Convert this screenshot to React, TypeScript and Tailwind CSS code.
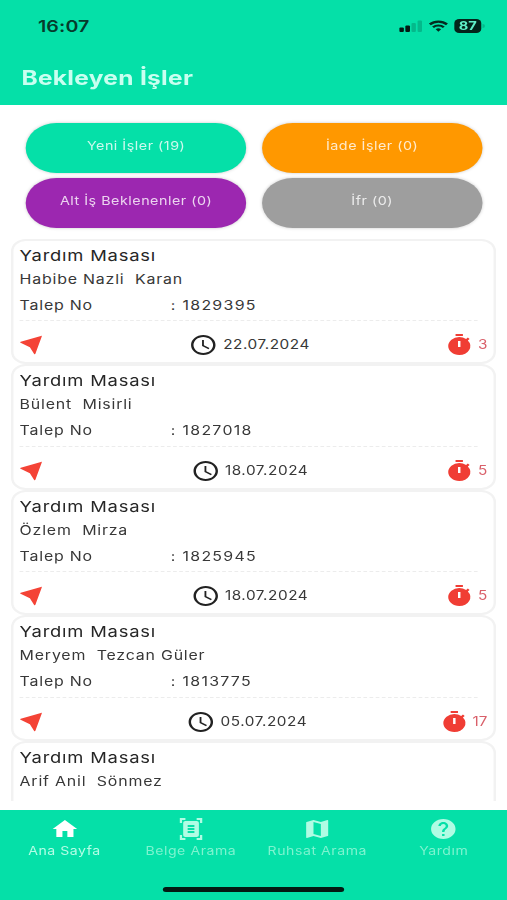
import type { ReactNode } from 'react';
import { MdAccessTime, MdDocumentScanner, MdHelp, MdHome, MdMap, MdTimer } from 'react-icons/md';

type Job = { name: string; no?: string; date?: string; days?: string };

const jobs: Job[] = [
  { name: 'Habibe Nazli  Karan', no: '1829395', date: '22.07.2024', days: '3' },
  { name: 'Bülent  Misirli', no: '1827018', date: '18.07.2024', days: '5' },
  { name: 'Özlem  Mirza', no: '1825945', date: '18.07.2024', days: '5' },
  { name: 'Meryem  Tezcan Güler', no: '1813775', date: '05.07.2024', days: '17' },
  { name: 'Arif Anil  Sönmez' },
];

function StatusBar() {
  return (
    <div className="flex h-[52px] items-center justify-between pl-[31px] pr-[18px] text-[#063b2c]">
      <span className="text-[16px] font-semibold leading-5 tracking-[0.1px]">16:07</span>
      <div className="flex items-center gap-[5px]">
        <svg className="h-3 w-[19px]" viewBox="0 0 19 12">
          <rect x="0" y="7.5" width="3.8" height="4.5" rx="1" fill="#031a13" />
          <rect x="5" y="5.5" width="3.8" height="6.5" rx="1" fill="#031a13" />
          <rect x="10" y="3" width="3.6" height="9" rx="1" fill="#04b98b" />
          <rect x="15" y="0.5" width="3.6" height="11.5" rx="1" fill="#04b98b" />
        </svg>
        <svg className="h-3 w-4" viewBox="0 0 16 12" fill="none" stroke="#042a1f" strokeWidth="2.2">
          <path d="M1 4.4a10 10 0 0 1 14 0" />
          <path d="M3.6 7.3a6.3 6.3 0 0 1 8.8 0" />
          <path d="M5.8 9.3 8 11.7l2.2-2.4a3.2 3.2 0 0 0-4.4 0z" fill="#042a1f" stroke="none" />
        </svg>
        <div className="flex items-center gap-px">
          <span className="flex h-[14px] w-[22px] items-center justify-center rounded-[4px] bg-[#03251b] text-[12px] font-bold leading-none text-[#5ff0c8]">
            87
          </span>
          <span className="h-1 w-[2px] rounded-r bg-[#04b98b]" />
        </div>
      </div>
    </div>
  );
}

function Pill({ color, children }: { color: string; children: ReactNode }) {
  return (
    <div
      className={`flex h-[50px] justify-center rounded-full pt-[14.5px] text-[11.7px] leading-4 tracking-[0.42px] text-white/80 shadow-[0_0_3px_rgba(0,0,0,0.22)] ${color}`}
    >
      {children}
    </div>
  );
}

function LocationArrow() {
  return (
    <svg className="h-6 w-7" viewBox="0 0 28 24" fill="#f44336">
      <path d="M.9 8.7 17.4 2.9c.5-.2.9.2.7.7L12.9 20.8c-.2.5-.8.5-1 .1L8.4 14.3.8 9.7c-.5-.3-.4-.8.1-1z" />
    </svg>
  );
}

function JobCard({ job }: { job: Job }) {
  return (
    <article className="h-[125.5px] shrink-0 rounded-[12px] border-2 border-[#f2f2f2] bg-white px-[5px] text-[#383838]">
      <h2 className="mt-[5px] text-[15px] leading-5 tracking-[0.65px] text-[#262626]">Yardım Masası</h2>
      <p className="mt-[3px] whitespace-pre text-[13px] leading-5 tracking-[0.65px]">{job.name}</p>
      {job.no && (
        <>
          <div className="mt-[6px] flex text-[13px] leading-5 tracking-[0.65px]">
            <span className="w-[123.5px]">Talep No</span>
            <span className="tracking-[1.05px]">: {job.no}</span>
          </div>
          <div className="mr-[8px] mt-[5.5px] border-t border-dashed border-[#ececec]" />
          <div className="mt-[12px] flex h-6 items-center justify-between">
            <LocationArrow />
            <span className="flex items-center gap-[4px] text-[12.5px] tracking-[0.45px]">
              <MdAccessTime className="size-6 text-[#222]" />
              <span className="pt-px">{job.date}</span>
            </span>
            <span className="flex items-center gap-[3px] text-[12.5px] text-[#d9606a]">
              <MdTimer className="size-6 shrink-0 text-[#f03d34]" />
              <span className="pt-px">{job.days}</span>
            </span>
          </div>
        </>
      )}
    </article>
  );
}

function Tab({ icon, label, active }: { icon: ReactNode; label: string; active?: boolean }) {
  return (
    <div className={`flex flex-1 flex-col items-center ${active ? 'text-white' : 'text-[#b0fce4]'}`}>
      <div className="flex h-6 items-center">{icon}</div>
      <span className={`mt-[2px] whitespace-nowrap text-[11.5px] leading-4 tracking-[0.45px] ${active ? 'text-[#b5fde6]' : 'text-[#7df3cf]'}`}>
        {label}
      </span>
    </div>
  );
}

export default function App() {
  return (
    <div className="h-[900px] w-[507px] overflow-hidden bg-white">
      <div className="flex h-[900px] w-[414px] origin-top-left scale-x-[1.2246] flex-col font-['Inter','Liberation_Sans',sans-serif]">
        <header className="h-[105px] shrink-0 bg-[#05e0a8]">
          <StatusBar />
          <h1 className="pl-[17.5px] pt-[13px] text-[20px] font-bold leading-[26px] tracking-[0.25px] text-[#c9fff0]">
            Bekleyen İşler
          </h1>
        </header>

        <section className="mt-[18px] grid shrink-0 grid-cols-2 gap-x-[12.5px] gap-y-[5px] pl-[21px] pr-[20px]">
          <Pill color="bg-[#05e0a8]">Yeni İşler (19)</Pill>
          <Pill color="bg-[#ff9800]">İade İşler (0)</Pill>
          <Pill color="bg-[#9c27b0]">Alt İş Beklenenler (0)</Pill>
          <Pill color="bg-[#9e9e9e]">İfr (0)</Pill>
        </section>

        <main className="mt-[10.5px] flex h-[562px] shrink-0 flex-col overflow-hidden px-[9px]">
          {jobs.map((job) => (
            <JobCard key={job.name} job={job} />
          ))}
        </main>

        <nav className="mt-auto flex h-[90px] shrink-0 flex-col bg-[#05e0a8]">
          <div className="flex pl-[1px] pt-[7px]">
            <Tab active icon={<MdHome className="size-6" />} label="Ana Sayfa" />
            <Tab icon={<MdDocumentScanner className="h-6 w-[22px]" preserveAspectRatio="none" />} label="Belge Arama" />
            <Tab icon={<MdMap className="size-6" />} label="Ruhsat Arama" />
            <Tab icon={<MdHelp className="size-6" />} label="Yardım" />
          </div>
          <div className="mx-auto mb-2 mt-auto h-[5px] w-[148px] rounded-full bg-[#031a13]" />
        </nav>
      </div>
    </div>
  );
}
